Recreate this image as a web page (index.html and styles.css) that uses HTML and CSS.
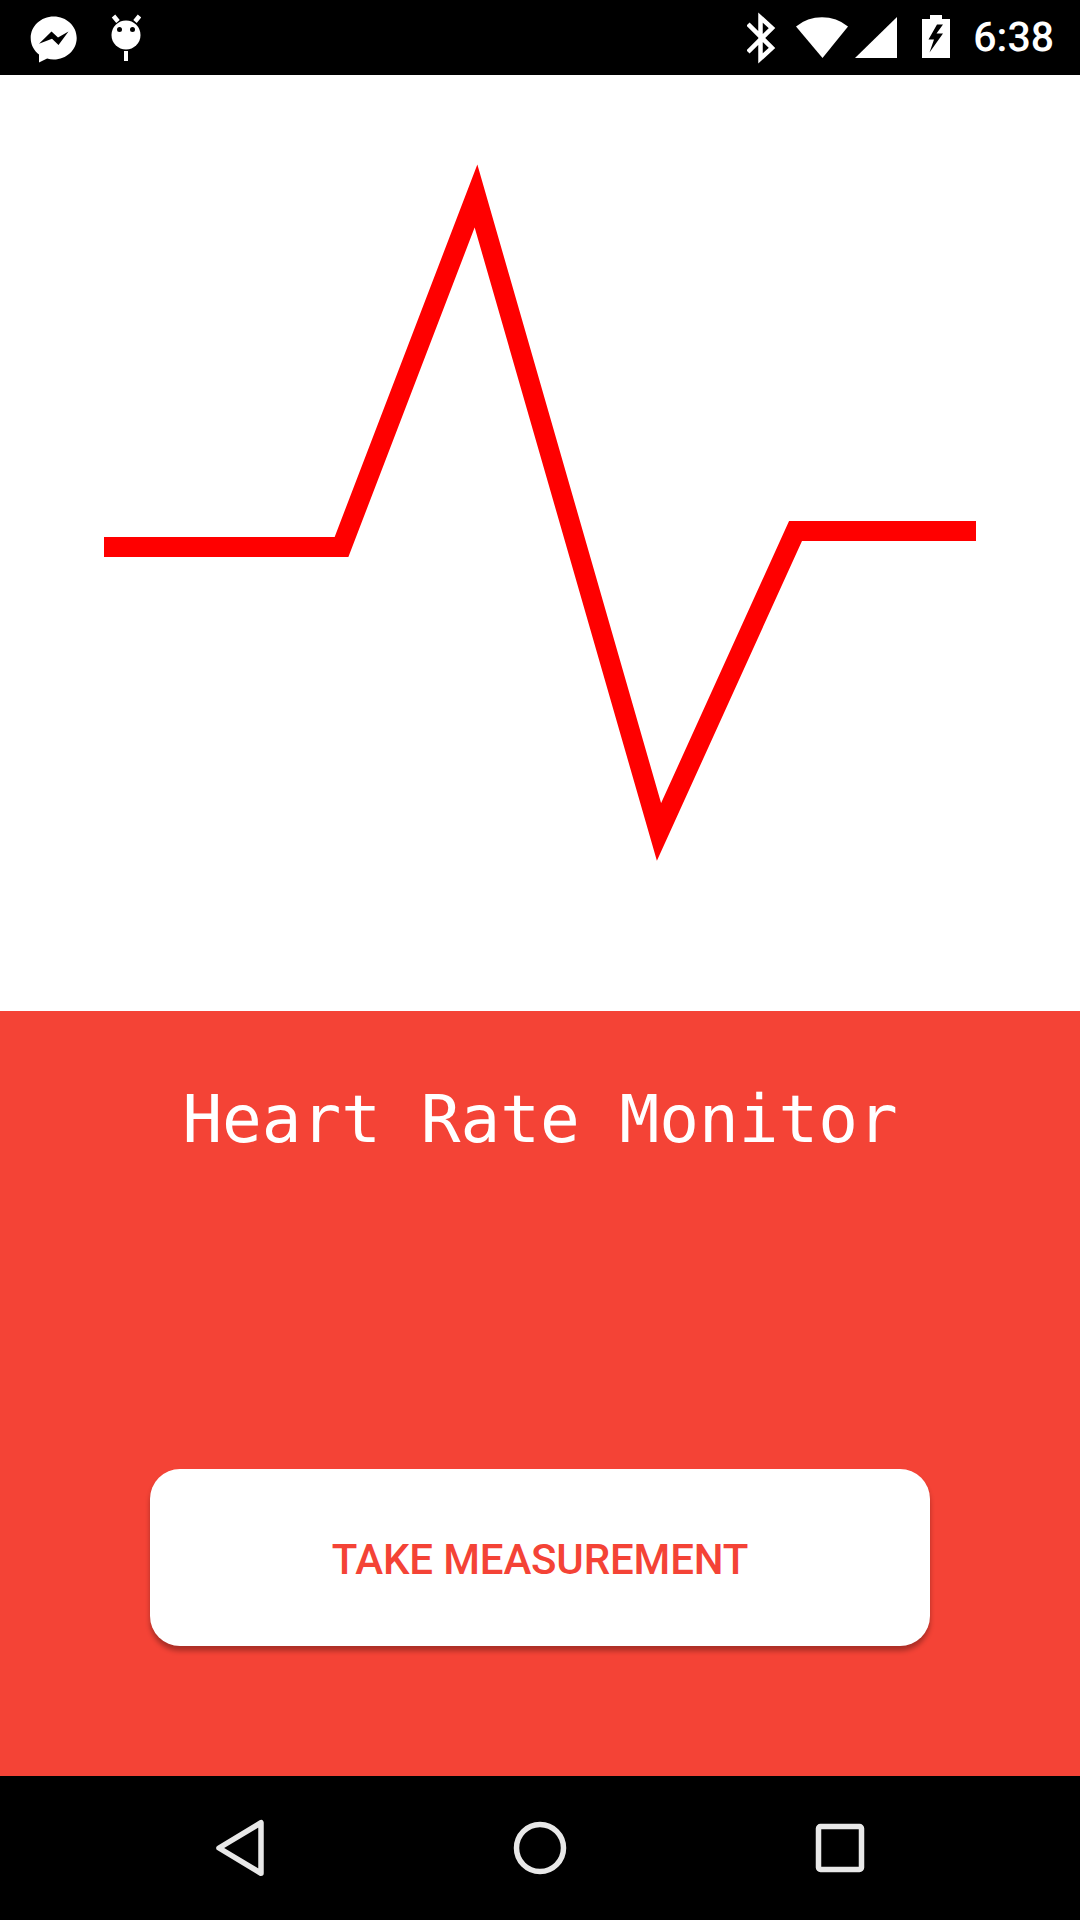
FILE: index.html
```html
<!DOCTYPE html>
<html lang="en">
<head>
  <meta charset="UTF-8">
  <meta name="viewport" content="width=device-width, initial-scale=1.0">
  <title>Heart Rate Monitor</title>
  <link rel="stylesheet" href="styles.css">
</head>
<body>
  <!-- Status bar -->
  <div class="status-bar">
    <svg class="notif-icons" viewBox="30 0 111 75" aria-hidden="true">
      <path class="white" d="M53.700 16.500c12.800 0 23 9.600 23 21.500s-10.200 21.500-23 21.500c-2.300 0-4.500-.3-6.600-.9L39 62.500V54.600C33.900 50.600 30.700 44.700 30.700 38c0-11.900 10.200-21.500 23-21.500z"/>
      <polygon class="black" points="39,43.800 51.500,31.500 58,37.500 68.500,31.500 58.500,45 52,38.800"/>
      <path class="line" d="M113.500 16l4.500 5.500M139.500 16l-4.500 5.500"/>
      <circle class="white" cx="126" cy="35" r="14.500"/>
      <circle class="black" cx="119.500" cy="29.500" r="2.500"/>
      <circle class="black" cx="132.500" cy="29.500" r="2.500"/>
      <rect class="white" x="124" y="51" width="4" height="10"/>
    </svg>
    <div class="status-right">
      <svg class="system-icons" viewBox="748 0 203 75" aria-hidden="true">
        <path class="line" d="M749 24l24 24-11.500 10.500V17.500L773 28l-24 24"/>
        <path class="white" d="M797 26.500A41 41 0 0 1 849 26.500L823.500 58z"/>
        <polygon class="white" points="856,58 898,17 898,58"/>
        <path class="white" fill-rule="evenodd" d="M931 15h12v4h8v39h-28V19h8zM938 24.500l-8.500 15h5.500l-4.500 13 13.500-19h-6.500l6.500-9z"/>
      </svg>
      <span class="clock">6:38</span>
    </div>
  </div>

  <!-- Graph -->
  <div class="graph">
    <svg class="pulse" viewBox="0 75 1080 936" aria-hidden="true">
      <polyline points="104,547 341.500,547 476,196 659,832 795.500,531 976,531"/>
    </svg>
  </div>

  <!-- Bottom panel -->
  <div class="panel">
    <h1>Heart Rate Monitor</h1>
    <button class="measure-btn">TAKE MEASUREMENT</button>
  </div>

  <!-- Navigation bar -->
  <div class="nav-bar">
    <svg viewBox="0 0 60 60" aria-hidden="true"><path d="M51 4.700v50.600L9 30z"/></svg>
    <svg viewBox="0 0 60 60" aria-hidden="true"><circle cx="30" cy="30" r="23.500"/></svg>
    <svg viewBox="0 0 60 60" aria-hidden="true"><rect x="8.500" y="8.500" width="43" height="43" rx="2"/></svg>
  </div>
</body>
</html>
```

FILE: styles.css
```css
* {
  margin: 0;
  padding: 0;
  box-sizing: border-box;
}

body {
  width: 1080px;
  height: 1920px;
  display: flex;
  flex-direction: column;
  font-family: 'Roboto', sans-serif;
  background-color: #fff;
  overflow: hidden;
  text-rendering: geometricPrecision;
}

.status-bar {
  height: 75px;
  padding: 0 26px 0 30px;
  display: flex;
  justify-content: space-between;
  align-items: center;
  background-color: #000;
  color: #fff;
}

.status-bar svg {
  height: 75px;
  display: block;
}

.notif-icons {
  width: 111px;
}

.system-icons {
  width: 203px;
}

.status-bar .white {
  fill: #fff;
}

.status-bar .black {
  fill: #000;
}

.status-bar .line {
  fill: none;
  stroke: #fff;
  stroke-width: 4.5;
}

.status-right {
  display: flex;
  align-items: center;
  gap: 23px;
}

.clock {
  font-size: 41px;
  font-weight: 500;
}

.graph {
  height: 936px;
  background-color: #fff;
}

.pulse {
  width: 1080px;
  height: 936px;
  display: block;
}

.pulse polyline {
  fill: none;
  stroke: #f00;
  stroke-width: 20;
  stroke-miterlimit: 10;
}

.panel {
  height: 765px;
  padding-bottom: 130px;
  display: flex;
  flex-direction: column;
  align-items: center;
  justify-content: space-between;
  background-color: #f44336;
}

.panel h1 {
  margin-top: 70px;
  font-family: 'DejaVu Sans Mono', monospace;
  font-size: 66px;
  line-height: 78px;
  font-weight: 400;
  color: #fff;
}

.measure-btn {
  width: 780px;
  height: 177px;
  padding-top: 4px;
  border: none;
  border-radius: 30px;
  background-color: #fff;
  color: #f44336;
  font-family: 'Roboto', sans-serif;
  font-size: 42px;
  font-weight: 500;
  letter-spacing: -0.15px;
  box-shadow: 0 5px 5px rgba(0, 0, 0, 0.3);
}

.nav-bar {
  height: 144px;
  padding: 0 90px;
  display: grid;
  grid-template-columns: repeat(3, 300px);
  justify-items: center;
  align-items: center;
  background-color: #000;
}

.nav-bar svg {
  width: 60px;
  height: 60px;
  display: block;
  fill: none;
  stroke: #e8e8e8;
  stroke-width: 5.5;
  stroke-linejoin: round;
}
```
